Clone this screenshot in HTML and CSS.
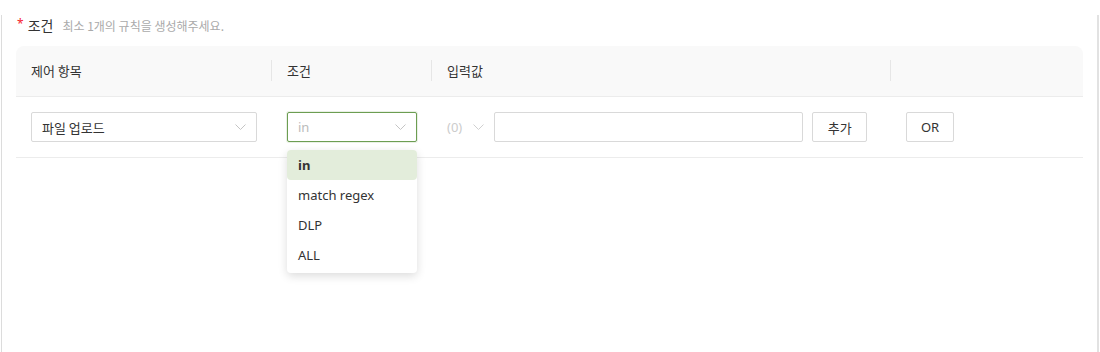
FILE: index.html
```html
<html><head>
    <meta charset="utf-8">
    <title>조건</title>
    <link rel="stylesheet" href="styles.css">
</head>
<body>
    <div class="frame">
        <div class="section-title">
            <span class="required">*</span>
            <span class="label">조건</span>
            <span class="hint">최소 1개의 규칙을 생성해주세요.</span>
        </div>
        <div class="rules">
            <div class="head">
                <div class="th"><span>제어 항목</span></div>
                <div class="th"><span>조건</span></div>
                <div class="th"><span>입력값</span></div>
                <div class="th last"><span></span></div>
            </div>
            <div class="row">
                <div class="td">
                    <div class="select wide">
                        <span class="value">파일 업로드</span>
                        <svg class="chevron" width="11" height="6" viewBox="0 0 11 6"><path d="M0.5 0.5 L5.5 5.5 L10.5 0.5" fill="none" stroke="#c4c4c4" stroke-width="1"/></svg>
                    </div>
                </div>
                <div class="td cond">
                    <div class="select focused">
                        <span class="value placeholder">in</span>
                        <svg class="chevron" width="11" height="6" viewBox="0 0 11 6"><path d="M0.5 0.5 L5.5 5.5 L10.5 0.5" fill="none" stroke="#c4c4c4" stroke-width="1"/></svg>
                    </div>
                    <ul class="menu">
                        <li class="active">in</li>
                        <li>match regex</li>
                        <li>DLP</li>
                        <li>ALL</li>
                    </ul>
                </div>
                <div class="td">
                    <span class="count">(0)</span>
                    <svg class="chevron small" width="11" height="6" viewBox="0 0 11 6"><path d="M0.5 0.5 L5.5 5.5 L10.5 0.5" fill="none" stroke="#d0d0d0" stroke-width="1"/></svg>
                    <input type="text" class="text-input">
                    <button class="btn add">추가</button>
                </div>
                <div class="td">
                    <button class="btn or">OR</button>
                </div>
            </div>
        </div>
    </div>
</body></html>
```

FILE: styles.css
```css
html, body {
    overflow: hidden;
}

body {
    margin: 0;
    background: #fff;
    font-family: "Noto Sans", "Noto Sans CJK KR", sans-serif;
    font-size: 13px;
    color: #333;
}

.frame {
    margin: 15px 0 0 1px;
    width: 1098px;
    height: 337px;
    box-sizing: border-box;
    border-left: 1px solid #dcdcdc;
    border-right: 2px solid #e2e2e2;
    padding: 0 14px;
}

.section-title {
    display: flex;
    align-items: center;
    height: 20px;
    padding-left: 1px;
}

.required {
    color: #f5222d;
    font-size: 12px;
    margin-right: 4px;
    position: relative;
    top: -2px;
}

.label {
    font-family: "Noto Sans CJK KR", sans-serif;
    font-size: 14px;
    color: #333;
}

.hint {
    font-family: "Noto Sans CJK KR", sans-serif;
    font-size: 12px;
    color: #aaa;
    margin-left: 9px;
}

.rules {
    margin-top: 11px;
}

.head, .row {
    display: grid;
    grid-template-columns: 256px 160px 459px 1fr;
}

.head {
    background: #f9f9f9;
    border-radius: 8px 8px 0 0;
    border-bottom: 1px solid #ececec;
    padding: 14px 0 15px;
}

.th {
    height: 21px;
    display: flex;
    align-items: center;
    padding-left: 15px;
    border-right: 1px solid #e6e6e6;
    font-family: "Noto Sans CJK KR", sans-serif;
    color: #333;
}

.th.last {
    border-right: none;
}

.row {
    height: 60px;
    border-bottom: 1px solid #ececec;
}

.td {
    display: flex;
    align-items: center;
    padding: 0 15px;
}

.td.cond {
    position: relative;
}

.select {
    box-sizing: border-box;
    height: 30px;
    width: 130px;
    border: 1px solid #d9d9d9;
    border-radius: 2px;
    display: flex;
    align-items: center;
    justify-content: space-between;
    padding: 0 10px 0 10px;
    background: #fff;
}

.select.wide {
    width: 226px;
}

.select.focused {
    border-color: #6c9d52;
    box-shadow: 0 0 0 1px rgba(108, 157, 82, 0.15);
}

.value {
    font-family: "Noto Sans CJK KR", sans-serif;
    color: #333;
}

.value.placeholder {
    font-family: "Noto Sans", sans-serif;
    color: #bbb;
}

.chevron {
    display: block;
}

.chevron.small {
    margin: 0 10px 0 11px;
}

.count {
    color: #ccc;
}

.text-input {
    box-sizing: border-box;
    width: 309px;
    height: 30px;
    border: 1px solid #d9d9d9;
    border-radius: 2px;
    margin: 0;
}

.btn {
    box-sizing: border-box;
    height: 30px;
    background: #fff;
    border: 1px solid #d9d9d9;
    border-radius: 2px;
    font-family: "Noto Sans CJK KR", sans-serif;
    font-size: 13px;
    color: #333;
    padding: 0;
}

.btn.add {
    width: 55px;
    margin-left: 9px;
}

.btn.or {
    width: 48px;
    font-family: "Noto Sans", sans-serif;
}

.menu {
    position: absolute;
    left: 15px;
    top: 53px;
    width: 130px;
    margin: 0;
    padding: 0 0 3px;
    list-style: none;
    background: #fff;
    border-radius: 4px;
    box-shadow: 0 3px 10px rgba(0, 0, 0, 0.14);
    z-index: 2;
}

.menu li {
    height: 30px;
    line-height: 30px;
    padding: 0 11px;
    color: #333;
}

.menu li.active {
    background: #e3eddb;
    border-radius: 4px;
    font-weight: bold;
}
```
